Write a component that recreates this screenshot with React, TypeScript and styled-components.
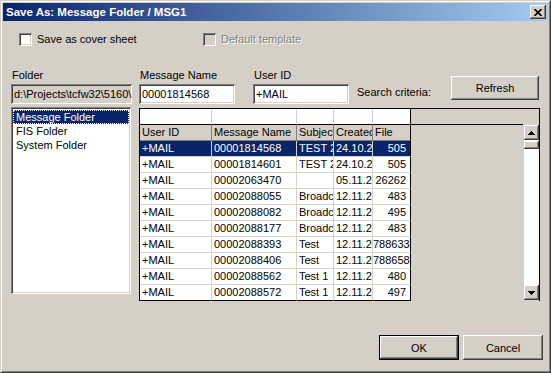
import React from 'react';
import styled, { createGlobalStyle, css } from 'styled-components';

const GlobalStyle = createGlobalStyle`
  html, body {
    margin: 0;
    padding: 0;
    background: #d4d0c8;
  }
  body {
    font-family: 'Liberation Sans', Arial, sans-serif;
    font-size: 11px;
    color: #000;
  }
  * {
    box-sizing: border-box;
  }
`;

const raised = css`
  background: #d4d0c8;
  box-shadow: inset -1px -1px #404040, inset 1px 1px #ffffff,
    inset -2px -2px #808080, inset 2px 2px #d4d0c8;
`;

const sunken = css`
  box-shadow: inset 1px 1px #808080, inset -1px -1px #ffffff,
    inset 2px 2px #404040, inset -2px -2px #d4d0c8;
`;

const Window = styled.div`
  width: 551px;
  height: 373px;
  border: 1px solid;
  border-color: #d4d0c8 #404040 #404040 #d4d0c8;
  background: #d4d0c8;
`;

const WindowInner = styled.div`
  height: 100%;
  border: 1px solid;
  border-color: #ffffff #808080 #808080 #ffffff;
  padding: 1px;
  display: flex;
  flex-direction: column;
`;

const TitleBar = styled.div`
  height: 18px;
  display: flex;
  align-items: center;
  padding-left: 3px;
  padding-right: 2px;
  background: linear-gradient(to right, #0a246a, #a6caf0);
`;

const TitleText = styled.div`
  flex: 1;
  color: #fff;
  font-weight: bold;
  font-size: 11.5px;
  white-space: nowrap;
`;

const CloseButton = styled.div`
  ${raised};
  width: 16px;
  height: 14px;
  display: flex;
  align-items: center;
  justify-content: center;
`;

const Client = styled.div`
  flex: 1;
  display: flex;
  flex-direction: column;
  padding: 0 5px 0 8px;
`;

const CheckRow = styled.div`
  display: flex;
  margin-top: 12px;
  padding-left: 8px;
  height: 13px;
`;

const CheckItem = styled.label<{ $width?: number }>`
  display: flex;
  align-items: center;
  gap: 5px;
  width: ${(p) => (p.$width ? `${p.$width}px` : 'auto')};
  line-height: 13px;
`;

const CheckBox = styled.span<{ $disabled?: boolean }>`
  ${sunken};
  width: 13px;
  height: 13px;
  flex: none;
  background: ${(p) => (p.$disabled ? '#d4d0c8' : '#fff')};
`;

const CheckLabel = styled.span<{ $disabled?: boolean }>`
  color: ${(p) => (p.$disabled ? '#808080' : '#000')};
  text-shadow: ${(p) => (p.$disabled ? '1px 1px #ffffff' : 'none')};
`;

const FieldsRow = styled.div`
  display: flex;
  align-items: flex-start;
  margin-top: 23px;
`;

const FieldGroup = styled.div<{ $width: number; $gap: number }>`
  width: ${(p) => p.$width}px;
  margin-right: ${(p) => p.$gap}px;
  display: flex;
  flex-direction: column;
`;

const FieldLabel = styled.div`
  height: 13px;
  line-height: 13px;
  margin-bottom: 2px;
  padding-left: 1px;
  white-space: nowrap;
`;

const Edit = styled.div<{ $disabled?: boolean }>`
  ${sunken};
  height: 20px;
  line-height: 20px;
  padding: 0 3px;
  overflow: hidden;
  white-space: nowrap;
  background: ${(p) => (p.$disabled ? '#d4d0c8' : '#fff')};
`;

const SearchLabel = styled.div`
  margin-top: 17px;
  line-height: 13px;
  white-space: nowrap;
`;

const Button = styled.div<{ $default?: boolean; $width: number; $height: number }>`
  ${raised};
  width: ${(p) => p.$width}px;
  height: ${(p) => p.$height}px;
  display: flex;
  align-items: center;
  justify-content: center;
  ${(p) =>
    p.$default &&
    css`
      border: 1px solid #000;
      box-shadow: inset -1px -1px #404040, inset 1px 1px #ffffff,
        inset -2px -2px #808080, inset 2px 2px #d4d0c8;
    `}
`;

const RefreshButton = styled(Button)`
  margin-left: auto;
  margin-right: 4px;
  margin-top: 7px;
`;

const MainRow = styled.div`
  display: flex;
  align-items: flex-start;
  margin-top: 3px;
`;

const ListBox = styled.div`
  ${sunken};
  background: #fff;
  width: 120px;
  height: 187px;
  margin-right: 8px;
  padding: 3px 2px 2px 2px;
`;

const ListItem = styled.div<{ $selected?: boolean }>`
  height: 14px;
  line-height: 12px;
  padding-left: 2px;
  white-space: nowrap;
  border: 1px dotted ${(p) => (p.$selected ? '#ffffff' : 'transparent')};
  background: ${(p) => (p.$selected ? '#0a246a' : 'transparent')};
  color: ${(p) => (p.$selected ? '#fff' : '#000')};
`;

const Grid = styled.div`
  margin-top: 1px;
  width: 401px;
  height: 193px;
  display: flex;
  border: 1px solid #000;
  border-bottom: none;
  background: #d4d0c8;
`;

const Cells = styled.div`
  display: grid;
  grid-template-columns: 72px 85px 37px 39px 38px;
  grid-auto-rows: 16px;
  align-self: flex-start;
`;

type CellKind = 'top' | 'head' | 'data';

const Cell = styled.div<{
  $kind: CellKind;
  $selected?: boolean;
  $right?: boolean;
  $last?: boolean;
  $lastRow?: boolean;
}>`
  overflow: hidden;
  white-space: nowrap;
  line-height: 15px;
  padding: ${(p) => (p.$right ? '0 4px 0 0' : '0 0 0 2px')};
  text-align: ${(p) => (p.$right ? 'right' : 'left')};
  background: ${(p) =>
    p.$kind === 'head' ? '#d4d0c8' : p.$selected ? '#0a246a' : '#ffffff'};
  color: ${(p) => (p.$selected ? '#fff' : '#000')};
  border-right: 1px solid
    ${(p) => (p.$last ? '#000' : p.$kind === 'head' ? '#808080' : '#d4d0c8')};
  border-bottom: 1px solid
    ${(p) =>
      p.$kind === 'top' || p.$lastRow
        ? '#000'
        : p.$kind === 'head'
        ? '#808080'
        : '#d4d0c8'};
`;

const RightPane = styled.div`
  flex: 1;
  display: flex;
  flex-direction: column;
`;

const TopStrip = styled.div`
  height: 16px;
  margin-right: 16px;
  border-bottom: 1px solid #000;
`;

const ScrollArea = styled.div`
  flex: 1;
  display: flex;
  justify-content: flex-end;
`;

const ScrollBar = styled.div`
  width: 15px;
  height: 175px;
  margin-right: 0px;
  background: #fff;
  display: flex;
  flex-direction: column;
`;

const ScrollButton = styled.div`
  ${raised};
  width: 15px;
  height: 15px;
  display: flex;
  align-items: center;
  justify-content: center;
  flex: none;
`;

const Thumb = styled.div`
  ${raised};
  width: 15px;
  height: 8px;
  margin-top: 1px;
`;

const Track = styled.div`
  flex: 1;
`;

const ButtonRow = styled.div`
  display: flex;
  justify-content: flex-end;
  gap: 4px;
  margin-top: 34px;
`;

const Arrow = ({ down }: { down?: boolean }) => (
  <svg width="7" height="4" viewBox="0 0 7 4">
    <path
      d={down ? 'M0 0h7L3.5 4z' : 'M3.5 0L7 4H0z'}
      fill="#000"
      shapeRendering="crispEdges"
    />
  </svg>
);

const rows = [
  ['+MAIL', '00001814568', 'TEST 2', '24.10.2003', '505'],
  ['+MAIL', '00001814601', 'TEST 2', '24.10.2003', '505'],
  ['+MAIL', '00002063470', '', '05.11.2003', '26262'],
  ['+MAIL', '00002088055', 'Broadcast', '12.11.2003', '483'],
  ['+MAIL', '00002088082', 'Broadcast', '12.11.2003', '495'],
  ['+MAIL', '00002088177', 'Broadcast', '12.11.2003', '483'],
  ['+MAIL', '00002088393', 'Test', '12.11.2003', '788633'],
  ['+MAIL', '00002088406', 'Test', '12.11.2003', '788658'],
  ['+MAIL', '00002088562', 'Test 1', '12.11.2003', '480'],
  ['+MAIL', '00002088572', 'Test 1', '12.11.2003', '497'],
];

const headers = ['User ID', 'Message Name', 'Subject', 'Created', 'File'];

export default function App() {
  return (
    <>
      <GlobalStyle />
      <Window>
        <WindowInner>
          <TitleBar>
            <TitleText>Save As: Message Folder / MSG1</TitleText>
            <CloseButton>
              <svg width="8" height="7" viewBox="0 0 8 7">
                <path
                  d="M0.5 0L7.5 7M7.5 0L0.5 7"
                  stroke="#000"
                  strokeWidth="1.6"
                />
              </svg>
            </CloseButton>
          </TitleBar>
          <Client>
            <CheckRow>
              <CheckItem $width={184}>
                <CheckBox />
                <CheckLabel>Save as cover sheet</CheckLabel>
              </CheckItem>
              <CheckItem>
                <CheckBox $disabled />
                <CheckLabel $disabled>Default template</CheckLabel>
              </CheckItem>
            </CheckRow>

            <FieldsRow>
              <FieldGroup $width={121} $gap={7}>
                <FieldLabel>Folder</FieldLabel>
                <Edit $disabled>d:\Projects\tcfw32\5160\</Edit>
              </FieldGroup>
              <FieldGroup $width={96} $gap={18}>
                <FieldLabel>Message Name</FieldLabel>
                <Edit>00001814568</Edit>
              </FieldGroup>
              <FieldGroup $width={96} $gap={8}>
                <FieldLabel>User ID</FieldLabel>
                <Edit>+MAIL</Edit>
              </FieldGroup>
              <SearchLabel>Search criteria:</SearchLabel>
              <RefreshButton $width={88} $height={24}>
                Refresh
              </RefreshButton>
            </FieldsRow>

            <MainRow>
              <ListBox>
                <ListItem $selected>Message Folder</ListItem>
                <ListItem>FIS Folder</ListItem>
                <ListItem>System Folder</ListItem>
              </ListBox>
              <Grid>
                <Cells>
                  {headers.map((h, i) => (
                    <Cell key={`top-${h}`} $kind="top" $last={i === 4} />
                  ))}
                  {headers.map((h, i) => (
                    <Cell key={`head-${h}`} $kind="head" $last={i === 4}>
                      {h}
                    </Cell>
                  ))}
                  {rows.map((row, r) =>
                    row.map((value, c) => (
                      <Cell
                        key={`cell-${r}-${c}`}
                        $kind="data"
                        $selected={r === 0}
                        $right={c === 4}
                        $last={c === 4}
                        $lastRow={r === rows.length - 1}
                      >
                        {value}
                      </Cell>
                    ))
                  )}
                </Cells>
                <RightPane>
                  <TopStrip />
                  <ScrollArea>
                    <ScrollBar>
                      <ScrollButton>
                        <Arrow />
                      </ScrollButton>
                      <Thumb />
                      <Track />
                      <ScrollButton>
                        <Arrow down />
                      </ScrollButton>
                    </ScrollBar>
                  </ScrollArea>
                </RightPane>
              </Grid>
            </MainRow>

            <ButtonRow>
              <Button $default $width={80} $height={25}>
                OK
              </Button>
              <Button $width={80} $height={25}>
                Cancel
              </Button>
            </ButtonRow>
          </Client>
        </WindowInner>
      </Window>
    </>
  );
}
